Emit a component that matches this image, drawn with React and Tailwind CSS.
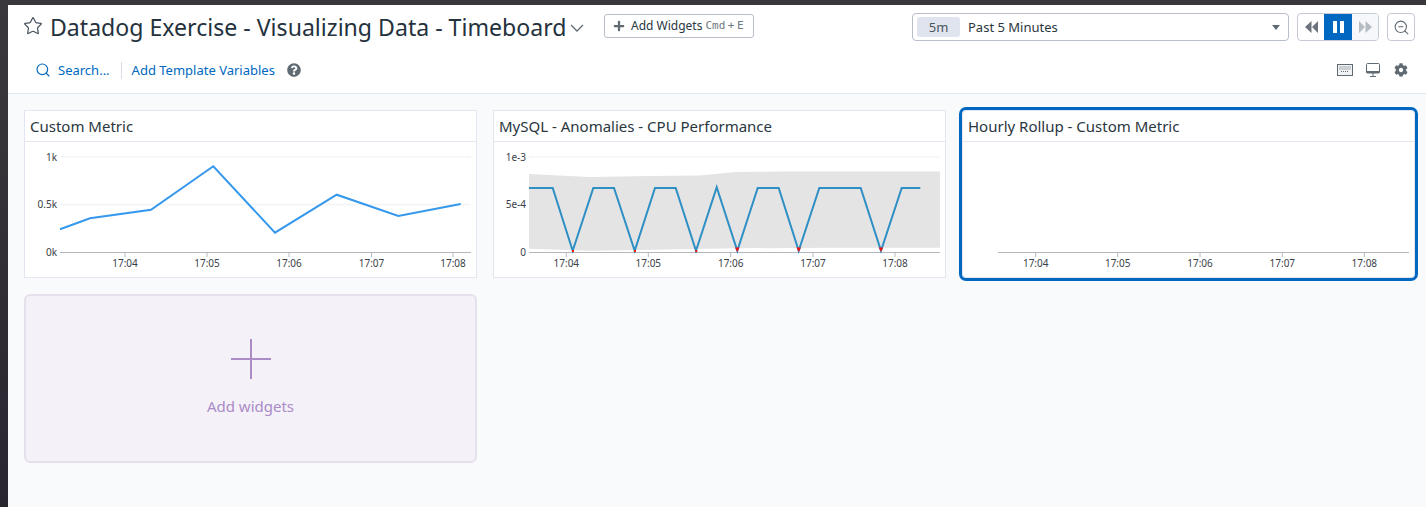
import { Star, Search, ZoomOut } from "lucide-react";
import { FaPlus, FaQuestionCircle, FaCog } from "react-icons/fa";

const TICK_LABELS = ["17:04", "17:05", "17:06", "17:07", "17:08"];

function Axis({ x1, x2, ticks, yLabels }) {
  return (
    <g>
      {yLabels &&
        yLabels.map((l) => (
          <g key={l.text}>
            {l.grid && <line x1={x1} x2={x2} y1={l.y} y2={l.y} stroke="#f3f4f7" strokeWidth="1.5" />}
            <text x={x1 - 3} y={l.y + 3.5} textAnchor="end" fontSize="10" fill="#3a4148">
              {l.text}
            </text>
          </g>
        ))}
      <line x1={x1} x2={x2} y1="252.5" y2="252.5" stroke="#b4b8be" />
      {ticks.map((t, i) => (
        <g key={t}>
          <line x1={t} x2={t} y1="252" y2="257" stroke="#b4b8be" />
          <text x={t} y="267" textAnchor="middle" fontSize="10" fill="#3a4148">
            {TICK_LABELS[i]}
          </text>
        </g>
      ))}
    </g>
  );
}

function Widget({ title, children, selected }) {
  return (
    <div
      className={`h-[168px] bg-white border border-[#e3e6f0] flex flex-col ${
        selected ? "rounded-[4px] outline-[3px] outline-[#0068c0]" : ""
      }`}
    >
      <div className="h-[31px] shrink-0 border-b border-[#e3e6f0] flex items-center px-[5px] pt-px text-[15px] text-[#2a3640]">
        {title}
      </div>
      {children}
    </div>
  );
}

function CustomMetricChart() {
  return (
    <svg width="451" height="135" viewBox="25 142 451 135" className="block">
      <Axis
        x1={60}
        x2={471}
        ticks={[125, 207, 289, 371.5, 453]}
        yLabels={[
          { text: "1k", y: 157, grid: true },
          { text: "0.5k", y: 204.5, grid: true },
          { text: "0k", y: 252 },
        ]}
      />
      <polyline
        points="60,229.3 90,218.3 151,209.7 213.3,166.3 275,232.7 336.7,194.7 398.3,216 460.7,204"
        fill="none"
        stroke="#3598ec"
        strokeWidth="2"
      />
      <path d="M166 199l2-2M243 198l1 2M328 200l3-2M349 199l3 1" stroke="#3598ec" strokeWidth="1" fill="none" />
    </svg>
  );
}

function AnomalyChart() {
  const line =
    "529,188 552.7,188 572.7,250.7 593.3,188 614,188 634.7,250.7 655,188 675.7,188 696,250.7 716.7,187.3 737.3,250.7 757.7,188 778.7,188 798.7,250.7 819.3,188 860.7,188 881,250.7 901.7,188 920.3,188";
  return (
    <svg width="451" height="135" viewBox="494 142 451 135" className="block">
      <Axis
        x1={529}
        x2={940}
        ticks={[566.3, 648.3, 730.7, 813, 895]}
        yLabels={[
          { text: "1e-3", y: 157, grid: true },
          { text: "5e-4", y: 204.5 },
          { text: "0", y: 252 },
        ]}
      />
      <path
        d="M529 174 L590 177 L650 176 L700 175.500 L735 172 L780 171.500 L940 171.500 L940 247.700 L830 247.700 L735 248.300 L640 250 L590 250.700 L529 248.700 Z"
        fill="#e4e4e4"
      />
      <polyline points={line} fill="none" stroke="#2d8fc4" strokeWidth="2" />
      <path
        d="M572 250h2v2h-2zM634 250h2v2h-2zM695.300 250h2v2h-2zM735 247.500h4.500l-2.250 4.500zM796.500 247.500h4.500l-2.250 4.500zM878.700 247.500h4.500l-2.250 4.500z"
        fill="#f40f0f"
      />
    </svg>
  );
}

function EmptyChart() {
  return (
    <svg width="451" height="135" viewBox="963 142 451 135" className="block">
      <Axis x1={998} x2={1409} ticks={[1035.7, 1117.7, 1200, 1282.3, 1364.3]} />
    </svg>
  );
}

function KeyboardIcon() {
  return (
    <svg width="16" height="12" viewBox="0 0 16 12" fill="none">
      <rect x="0.5" y="0.5" width="15" height="11" fill="#f1f2f3" stroke="#5f6a73" />
      <path d="M2.500 3h11M2.500 5h11M4 7.500h8" stroke="#5f6a73" strokeWidth="1" strokeDasharray="1 1" />
    </svg>
  );
}

function MonitorIcon() {
  return (
    <svg width="14" height="14" viewBox="0 0 14 14" fill="none">
      <rect x="0.500" y="0.500" width="13" height="9.500" rx="1" fill="#fff" stroke="#5f6a73" />
      <rect x="0.500" y="8" width="13" height="2" fill="#5f6a73" />
      <path d="M7 10v3M4 13.500h6" stroke="#5f6a73" />
    </svg>
  );
}

export default function App() {
  return (
    <div
      className="h-[507px] w-[1426px] overflow-hidden flex flex-col bg-gradient-to-b from-[#3b383d] to-[#2a2630] pt-[5px]"
      style={{ fontFamily: '"Noto Sans", sans-serif' }}
    >
      <div className="flex-1 ml-2 flex flex-col bg-[#f9fafc]">
        <header className="h-[89px] shrink-0 bg-white border-b border-[#e4e8f0] flex flex-col">
          <div className="flex items-center h-[44px] pl-4">
            <Star size={20} strokeWidth={1.5} className="shrink-0 text-[#4a5560] -ml-px mr-[7px] -mt-[2px]" />
            <h1 className="w-[516px] shrink-0 text-[23.1px] leading-8 text-[#24323d] whitespace-nowrap">
              Datadog Exercise - Visualizing Data - Timeboard
            </h1>
            <svg width="14" height="8" viewBox="0 0 14 8" fill="none" className="shrink-0 ml-[4px] mt-[1px]">
              <path d="M1 1l6 6 6-6" stroke="#5f6a73" strokeWidth="1.3" />
            </svg>
            <button className="shrink-0 ml-[20px] -mt-[2px] h-6 w-[150px] border border-[#b8bdca] rounded-[3px] flex items-center pl-[8px] text-[12px] text-[#2a3640] whitespace-nowrap">
              <FaPlus size={12} className="text-[#5f6a73] mr-[6px]" />
              Add Widgets
              <span
                className="ml-[3px] flex gap-[2.5px] text-[11px] text-[#6f7780]"
                style={{ fontFamily: '"DejaVu Sans Mono", monospace' }}
              >
                <span>Cmd</span>
                <span>+</span>
                <span>E</span>
              </span>
            </button>
            <div className="shrink-0 ml-[158px] h-7 w-[377px] border border-[#b8bdca] rounded-[4px] flex items-center pl-1 pr-[8px] text-[13px] text-[#2a3640]">
              <span className="w-[43px] h-5 rounded-[3px] bg-[#e0e4ee] flex items-center justify-center pt-px text-[#4a5560]">5m</span>
              <span className="ml-2 flex-1 pt-px">Past 5 Minutes</span>
              <span className="w-0 h-0 border-x-[4px] border-x-transparent border-t-[5px] border-t-[#5f6a73]" />
            </div>
            <div className="shrink-0 ml-2 h-7 w-[82px] border border-[#c6cad6] rounded-[4px] flex overflow-hidden">
              <div className="flex-1 flex items-center justify-center">
                <svg width="13" height="12" viewBox="0 0 13 12" fill="#6b747c">
                  <path d="M6.500 0v12L0 6zM13 0v12L7 6z" />
                </svg>
              </div>
              <div className="w-7 bg-[#0068c0] flex items-center justify-center gap-[3px]">
                <span className="w-1 h-3 bg-white" />
                <span className="w-1 h-3 bg-white" />
              </div>
              <div className="flex-1 bg-[#f6f7fa] flex items-center justify-center">
                <svg width="13" height="12" viewBox="0 0 13 12" fill="#b6bcc4">
                  <path d="M0 0v12l6-6zM6.500 0v12L13 6z" />
                </svg>
              </div>
            </div>
            <div className="shrink-0 ml-2 h-7 w-7 border border-[#c6cad6] rounded-[4px] flex items-center justify-center">
              <ZoomOut size={17} strokeWidth={1.5} className="text-[#5f6a73]" />
            </div>
          </div>
          <div className="flex items-center h-[26px] mt-2 pl-[27px] pr-[18px] text-[13px] text-[#0068c0]">
            <Search size={16} strokeWidth={1.75} />
            <span className="ml-[7px] pt-px">Search...</span>
            <span className="w-px h-[17px] bg-[#d9dde6] ml-[11px] mr-[10px]" />
            <span className="pt-px">Add Template Variables</span>
            <FaQuestionCircle size={14} className="text-[#5f6a73] ml-3" />
            <div className="ml-auto flex items-center text-[#5f6a73]">
              <KeyboardIcon />
              <span className="ml-[13px]">
                <MonitorIcon />
              </span>
              <FaCog size={14} className="ml-[14px]" />
            </div>
          </div>
        </header>
        <main className="grid grid-cols-[453px_453px_453px] gap-4 pl-4 pt-4">
          <Widget title="Custom Metric">
            <CustomMetricChart />
          </Widget>
          <Widget title="MySQL - Anomalies - CPU Performance">
            <AnomalyChart />
          </Widget>
          <Widget title="Hourly Rollup - Custom Metric" selected>
            <EmptyChart />
          </Widget>
          <div className="h-[169px] rounded-[6px] border-2 border-[#e6e0ec] bg-[#f4f1f8] flex flex-col items-center text-[#ab8cc6]">
            <div className="relative w-10 h-10 mt-[43px]">
              <span className="absolute left-[19px] top-0 w-0.5 h-10 bg-[#ab8cc6]" />
              <span className="absolute top-[19px] left-0 h-0.5 w-10 bg-[#ab8cc6]" />
            </div>
            <span className="mt-[16px] text-[15px]">Add widgets</span>
          </div>
        </main>
      </div>
    </div>
  );
}
